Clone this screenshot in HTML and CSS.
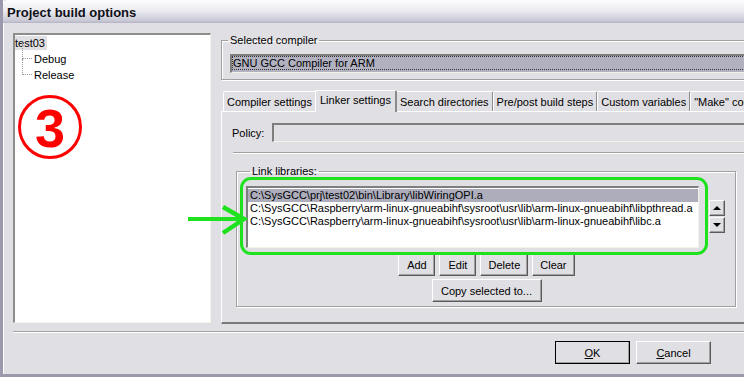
FILE: index.html
```html
<!DOCTYPE html>
<html lang="en">
<head>
    <meta charset="UTF-8">
    <title>Project build options</title>
    <link rel="stylesheet" href="styles.css">
</head>
<body>
    <div class="window">
        <div class="titlebar">Project build options</div>
        <div class="client">
            <div class="main">
                <div class="tree">
                    <div class="node root"><span class="sel">test03</span></div>
                    <div class="node child">Debug</div>
                    <div class="node child">Release</div>
                </div>
                <div class="side">
                    <fieldset class="group compiler">
                        <legend>Selected compiler</legend>
                        <div class="combo"><span class="focus">GNU GCC Compiler for ARM</span></div>
                    </fieldset>
                    <div class="tabs">
                        <div class="tab">Compiler settings</div>
                        <div class="tab active">Linker settings</div>
                        <div class="tab">Search directories</div>
                        <div class="tab">Pre/post build steps</div>
                        <div class="tab">Custom variables</div>
                        <div class="tab">"Make" commands</div>
                    </div>
                    <div class="panel">
                        <div class="policy">
                            <label>Policy:</label>
                            <div class="field"></div>
                        </div>
                        <div class="sep"></div>
                        <div class="groups">
                            <fieldset class="group libs">
                                <legend>Link libraries:</legend>
                                <div class="list-row">
                                    <div class="list">
                                        <div class="item selected">C:\SysGCC\prj\test02\bin\Library\libWiringOPI.a</div>
                                        <div class="item">C:\SysGCC\Raspberry\arm-linux-gnueabihf\sysroot\usr\lib\arm-linux-gnueabihf\libpthread.a</div>
                                        <div class="item">C:\SysGCC\Raspberry\arm-linux-gnueabihf\sysroot\usr\lib\arm-linux-gnueabihf\libc.a</div>
                                    </div>
                                    <div class="spin">
                                        <button class="btn arrow"><span class="up"></span></button>
                                        <button class="btn arrow"><span class="down"></span></button>
                                    </div>
                                </div>
                                <div class="btn-row">
                                    <button class="btn small">Add</button>
                                    <button class="btn small">Edit</button>
                                    <button class="btn small">Delete</button>
                                    <button class="btn small">Clear</button>
                                </div>
                                <div class="btn-row">
                                    <button class="btn copy">Copy selected to...</button>
                                </div>
                            </fieldset>
                            <fieldset class="group other"></fieldset>
                        </div>
                    </div>
                </div>
            </div>
            <div class="footer">
                <button class="btn dlg default"><u>O</u>K</button>
                <button class="btn dlg"><u>C</u>ancel</button>
            </div>
        </div>
    </div>

    <div class="step-mark">3</div>
    <div class="highlight"></div>
    <svg class="pointer" width="64" height="34" viewBox="0 0 64 34">
        <path d="M1 15 H56" stroke="#1ee21e" stroke-width="4" fill="none"/>
        <path d="M36 3 L57 15 L36 29" stroke="#1ee21e" stroke-width="4.5" fill="none" stroke-linejoin="miter"/>
    </svg>
</body>
</html>
```

FILE: styles.css
```css
body {
    margin: 0;
    width: 744px;
    height: 377px;
    overflow: hidden;
    position: relative;
    font-family: "Liberation Sans", Arial, sans-serif;
    font-size: 11px;
    color: #000;
    background: #e0dfe3;
}
.window {
    width: 790px;
    height: 374px;
    background: #e0dfe3;
    border-left: 3px solid #9a9aac;
    border-bottom: 3px solid #9a9aac;
    box-shadow: inset 1px 0 #ffffff;
}
.titlebar {
    height: 23px;
    line-height: 25px;
    padding-left: 4px;
    font-family: "Liberation Sans", Arial, sans-serif;
    font-weight: bold;
    font-size: 13px;
    color: #101018;
    background: linear-gradient(#fdfdfe, #ececf1 45%, #c9c9d6 90%, #b3b3c4);
    border-top-left-radius: 5px;
}
.client {
    padding: 10px 0 0 10px;
}
.main {
    display: flex;
    gap: 10px;
    height: 290px;
}
.tree {
    flex-shrink: 0;
    width: 195px;
    height: 287px;
    background: #fff;
    border-top: 2px solid #8d8d8d;
    border-left: 2px solid #8d8d8d;
    border-right: 1px solid #f4f3ea;
    border-bottom: 1px solid #f4f3ea;
}
.node {
    height: 16px;
    line-height: 16px;
    position: relative;
}
.root .sel {
    background: #e0dfe3;
    padding: 1px 2px 1px 0;
}
.child {
    padding-left: 19px;
}
.child::before {
    content: "";
    position: absolute;
    left: 7px;
    top: -8px;
    width: 9px;
    height: 15px;
    border-left: 1px dotted #9a9a9a;
    border-bottom: 1px dotted #9a9a9a;
}
.side {
    flex: 1;
    min-width: 0;
    padding-top: 1px;
}
.group {
    margin: 0;
    padding: 0 10px;
    min-width: 0;
    border: 1px solid #a0a0a0;
    box-shadow: inset 1px 1px #fff, 1px 1px #fff;
}
.group legend {
    padding: 0 2px;
    margin-left: 5px;
    line-height: 13px;
}
.compiler {
    height: 37px;
    padding: 7px 0 0 8px;
}
.compiler legend {
    margin-left: -2px;
}
.combo {
    height: 14px;
    padding: 1px 2px 1px 1px;
    background: #b1b1c0;
    border-top: 2px solid #7e7e7e;
    border-left: 2px solid #7e7e7e;
    border-bottom: 1px solid #f4f3ea;
}
.focus {
    display: block;
    height: 12px;
    line-height: 13px;
    outline: 1px dotted #333;
    outline-offset: 0;
}
.tabs {
    display: flex;
    margin: 10px 0 0 2px;
    height: 21px;
    align-items: flex-end;
}
.tab {
    height: 19px;
    line-height: 20px;
    padding: 0 3px;
    white-space: nowrap;
    border-top: 1px solid #fff;
    border-left: 1px solid #fff;
    border-right: 2px solid #8a8a8a;
    border-top-left-radius: 2px;
    border-top-right-radius: 2px;
    margin-right: -1px;
}
.tab.active {
    height: 21px;
    line-height: 19px;
    padding: 0 4px;
    margin: 0 -1px -1px -1px;
    position: relative;
    z-index: 1;
    background: #e0dfe3;
}
.panel {
    height: 199px;
    padding: 11px 0 0 10px;
    border-top: 1px solid #fff;
    border-left: 1px solid #fff;
    border-bottom: 2px solid #7a7a7a;
}
.policy {
    display: flex;
    align-items: center;
    gap: 8px;
}
.field {
    flex: 1;
    height: 16px;
    border-top: 2px solid #7e7e7e;
    border-left: 2px solid #7e7e7e;
    border-bottom: 1px solid #f4f3ea;
}
.sep {
    margin: 10px 0 0 1px;
    border-top: 1px solid #a0a0a0;
    border-bottom: 1px solid #fff;
}
.groups {
    display: flex;
    gap: 8px;
    margin: 11px 0 0 4px;
}
.libs {
    width: 489px;
    height: 132px;
    padding: 8px 0 0 9px;
}
.libs legend {
    margin-left: 4px;
}
.other {
    flex: 1;
    height: 141px;
    margin-top: 6px;
}
.list-row {
    display: flex;
    align-items: flex-start;
    gap: 10px;
}
.list {
    width: 450px;
    height: 58px;
    padding-top: 1px;
    background: #fff;
    border-top: 2px solid #7e7e7e;
    border-left: 2px solid #7e7e7e;
    border-right: 1px solid #f4f3ea;
    border-bottom: 1px solid #f4f3ea;
    overflow: hidden;
}
.item {
    height: 13px;
    line-height: 13px;
    padding-left: 2px;
    white-space: nowrap;
}
.item.selected {
    background: #adadbc;
}
.spin {
    display: flex;
    flex-direction: column;
    gap: 1px;
    margin-top: 14px;
}
.btn {
    font-family: "Liberation Sans", Arial, sans-serif;
    font-size: 11px;
    color: #000;
    background: #e0dfe3;
    padding: 0;
    border-top: 1px solid #fff;
    border-left: 1px solid #fff;
    border-right: 1px solid #5a5a5a;
    border-bottom: 1px solid #5a5a5a;
    box-shadow: inset -1px -1px #a0a0a0;
}
.arrow {
    width: 16px;
    height: 16px;
    display: flex;
    align-items: center;
    justify-content: center;
}
.up {
    border-left: 4px solid transparent;
    border-right: 4px solid transparent;
    border-bottom: 4px solid #000;
}
.down {
    border-left: 4px solid transparent;
    border-right: 4px solid transparent;
    border-top: 4px solid #000;
}
.btn-row {
    display: flex;
    justify-content: center;
    gap: 4px;
    margin: 5px 0 0 -8px;
}
.btn-row + .btn-row {
    margin-top: 3px;
}
.small {
    height: 23px;
    padding: 0 7px;
    min-width: 37px;
}
.copy {
    height: 23px;
    width: 110px;
}
.footer {
    margin-top: 8px;
    padding-top: 9px;
    border-top: 1px solid #a0a0a0;
    box-shadow: inset 0 1px #fff;
    display: flex;
    gap: 6px;
    padding-left: 542px;
}
.dlg {
    width: 75px;
    height: 23px;
}
.dlg.default {
    outline: 1px solid #000;
    outline-offset: -1px;
    border-right-color: #000;
    border-bottom-color: #000;
}
.step-mark {
    position: absolute;
    left: 18px;
    top: 95px;
    width: 58px;
    height: 58px;
    border: 3px solid #ff0000;
    border-radius: 50%;
    color: #ff0000;
    font-family: "Liberation Sans", Arial, sans-serif;
    font-weight: bold;
    font-size: 54px;
    line-height: 60px;
    text-align: center;
}
.highlight {
    position: absolute;
    left: 240px;
    top: 177px;
    width: 462px;
    height: 72px;
    border: 3px solid #1ee21e;
    border-radius: 11px;
}
.pointer {
    position: absolute;
    left: 187px;
    top: 204px;
}
```
